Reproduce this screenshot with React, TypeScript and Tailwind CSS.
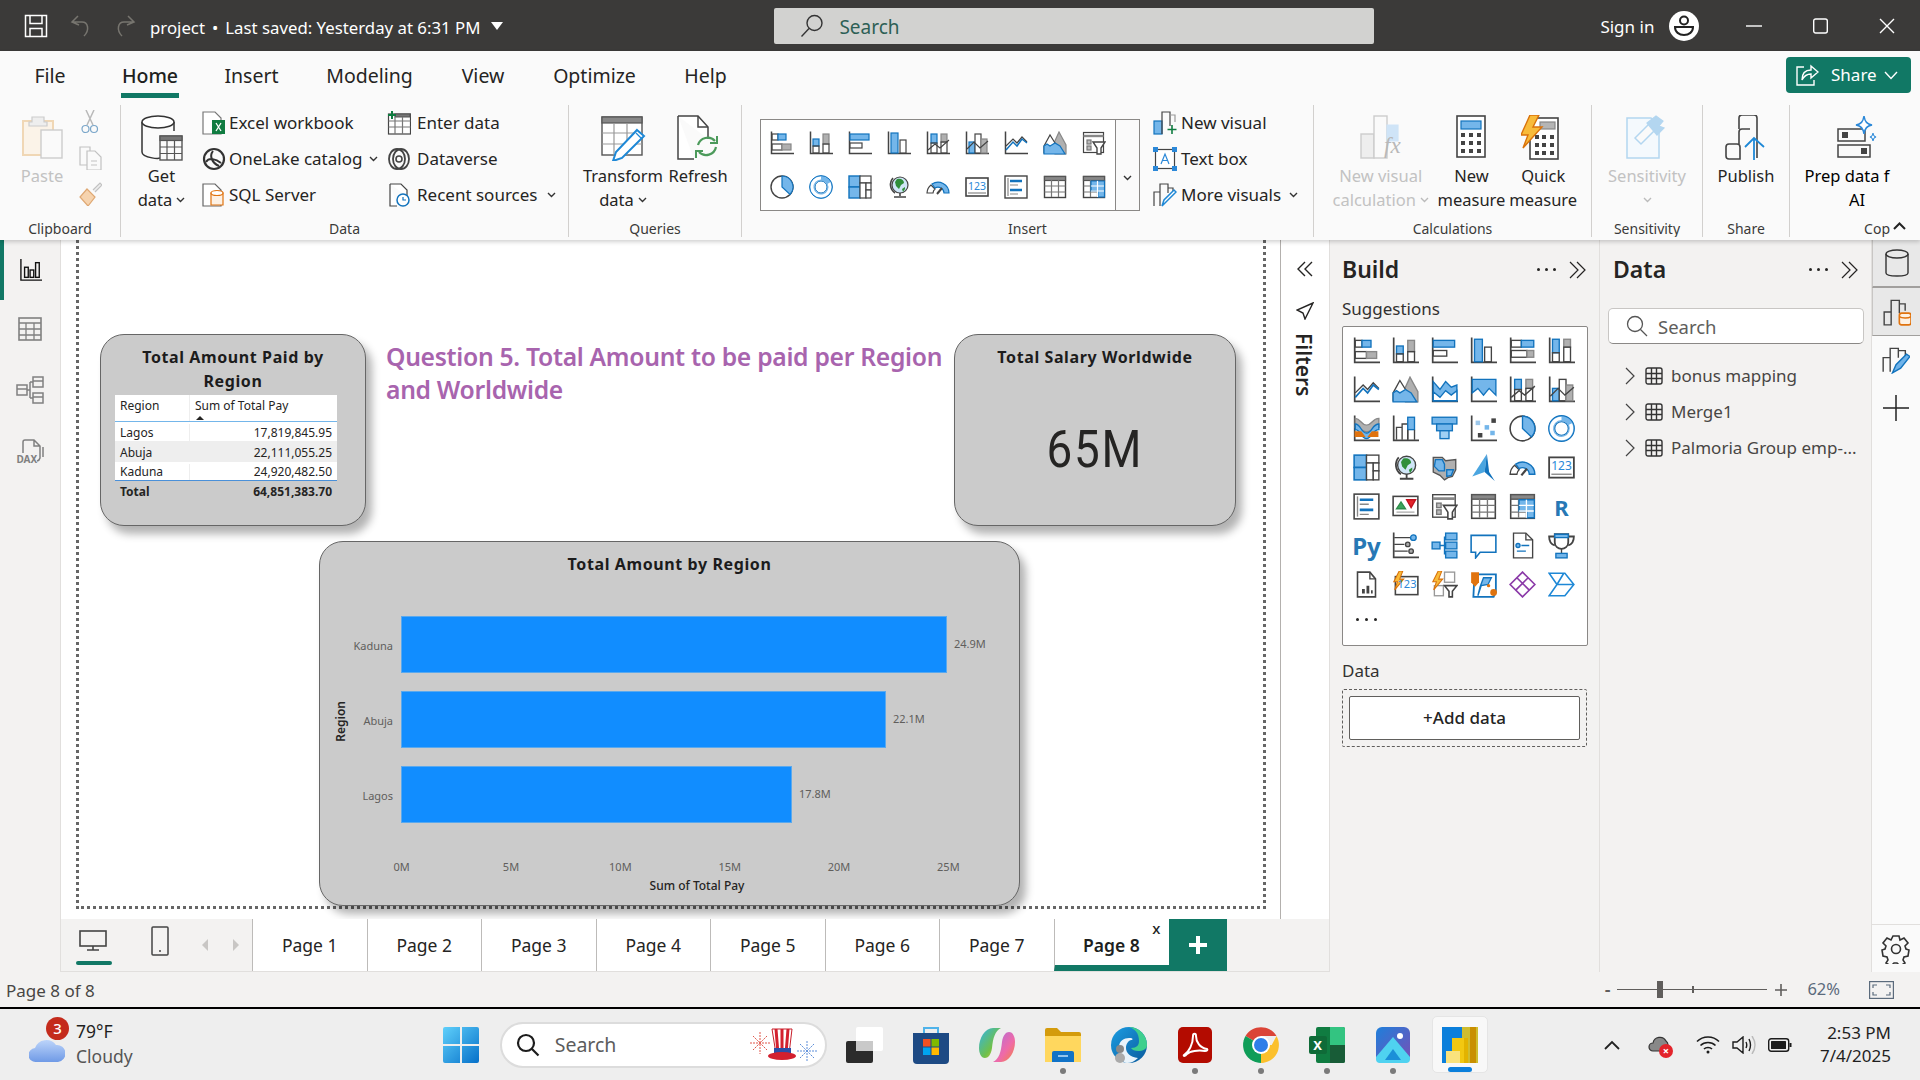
import type { ReactNode } from "react";

const DK = "#444444";
const BL = "#1273bd";
const LB = "#74b6ea";
const GY = "#b0b0b0";
const OR = "#e0730f";

function Svg({ s = 24, h, vb = "0 0 24 24", children, className }: { s?: number; h?: number; vb?: string; children: ReactNode; className?: string }) {
  return (
    <svg width={s} height={h ?? s} viewBox={vb} fill="none" stroke={DK} strokeWidth={1.2} className={`shrink-0 ${className ?? ""}`}>
      {children}
    </svg>
  );
}

const axis = <path d="M1.5 .5V22.5H24" strokeWidth={1.5} />;
const bolt = <path d="M8 0 2 12h4L3 21l10-12H8.500L12 0Z" fill="#f8bb3a" stroke="#d9720b" />;
const gridTable = (
  <>
    <rect x="1.500" y="1.500" width="21" height="21" fill="#fff" strokeWidth={1.4} />
    <rect x="1.500" y="1.500" width="21" height="4" fill="#888" stroke="#555" />
    <path d="M1.500 11h21M1.500 17h21M8.500 5v17M15.500 5v17" stroke="#777" />
  </>
);

// visual gallery glyphs, shared by the Insert group and the Build pane
const charts: Record<string, ReactNode> = {
  stackedBar: (<>{axis}<rect x="2" y="3" width="6" height="6" /><rect x="8" y="3" width="8" height="6" fill={LB} stroke={BL} /><rect x="2" y="13" width="10" height="6" /><rect x="12" y="13" width="9" height="6" fill={GY} stroke="#888" /></>),
  stackedCol: (<>{axis}<rect x="4" y="8" width="6" height="7" fill={LB} stroke={BL} /><rect x="4" y="15" width="6" height="7" /><rect x="14" y="3" width="6" height="10" fill={GY} stroke="#888" /><rect x="14" y="13" width="6" height="9" /></>),
  clusteredBar: (<>{axis}<rect x="2" y="3" width="19" height="6" fill={LB} stroke={BL} /><rect x="2" y="12" width="12" height="5" fill="#fff" /></>),
  clusteredCol: (<>{axis}<rect x="4" y="2" width="7" height="20" fill={LB} stroke={BL} /><rect x="13" y="9" width="6" height="13" fill="#fff" /></>),
  hbar100: (<>{axis}<rect x="2" y="3" width="9" height="6" /><rect x="11" y="3" width="11" height="6" fill={LB} stroke={BL} /><rect x="2" y="12" width="14" height="6" /><rect x="16" y="12" width="6" height="6" fill={GY} stroke="#888" /></>),
  vbar100: (<>{axis}<rect x="4" y="2" width="6" height="12" fill={LB} stroke={BL} /><rect x="4" y="14" width="6" height="8" /><rect x="14" y="2" width="6" height="7" fill={GY} stroke="#888" /><rect x="14" y="9" width="6" height="13" /></>),
  line: (<>{axis}<path d="M2 15 9 8l4 4 5-6 5 5" /><path d="m2 19 7-8 4 4 5-7 5 4" stroke={BL} strokeWidth={1.5} /></>),
  area: (<><path d="M11 12 16 1l7 13v9H12Z" fill={GY} stroke="#888" /><path d="M1 15 7 4l5 8 6 10H1Z" fill="#fff" /><path d="M1 15v8h21l-5-8-5-3-5 3-3-2Z" fill={LB} stroke={BL} /></>),
  stackedArea: (<>{axis}<path d="M2 5 8 12l5-7 5 5 5-2v14H2Z" fill={LB} stroke={BL} /><path d="M2 14l6 5 5-6 5 4 5-4v9H2Z" fill="#fff" stroke={BL} /></>),
  area100: (<>{axis}<path d="M2 3h21v14l-6-6-5 6-5-6-5 4Z" fill={LB} stroke={BL} /></>),
  lineStacked: (<>{axis}<rect x="5" y="3" width="6" height="9" fill={LB} stroke={BL} /><rect x="5" y="12" width="6" height="10" /><rect x="15" y="3" width="6" height="8" fill={GY} stroke="#888" /><rect x="15" y="11" width="6" height="11" /><path d="m2 19 7-6 5 4 9-8" /></>),
  lineClustered: (<>{axis}<rect x="4" y="11" width="6" height="11" fill={LB} stroke={BL} /><rect x="10" y="3" width="6" height="19" fill="#fff" /><rect x="16" y="8" width="6" height="14" fill={GY} stroke="#888" /><path d="m2 18 7-7 6 6 8-7" /></>),
  ribbon: (<>{axis}<path d="M2 3c5 0 5 6 10 6s5-6 11-6v8c-6 0-6 4-11 4S7 11 2 11Z" fill={GY} stroke="#888" /><path d="M2 8c5 0 5 8 10 8s5-8 11-8v5c-6 0-6 8-11 8S7 13 2 13Z" fill={LB} stroke={BL} /><path d="M2 15h5l3 4H2ZM22 15h-5l-3 4h8Z" fill={OR} stroke={OR} /></>),
  waterfall: (<>{axis}<path d="M4 22V11h5v11M9 22V8h5v14" /><rect x="14" y="2" width="6" height="11" fill={LB} stroke={BL} /><path d="M14 22v-9M20 22V13" /></>),
  funnel: (<><rect x="1" y="2" width="22" height="6" fill={LB} stroke={BL} /><rect x="5" y="8" width="14" height="6" fill={LB} stroke={BL} /><rect x="8" y="14" width="8" height="7" fill="#9fd0f4" stroke={BL} /></>),
  scatter: (<>{axis}<g stroke="none"><rect x="5" y="5" width="4" height="4" fill="#9cc7ea" /><rect x="13" y="9" width="4" height="4" fill={LB} /><rect x="19" y="3" width="4" height="4" fill="#444" /><rect x="7" y="16" width="4" height="4" fill="#444" /><rect x="18" y="14" width="4" height="4" fill={LB} /></g></>),
  pie: (<><circle cx="12" cy="12" r="11" fill="#fff" strokeWidth={1.4} /><path d="M12 1a11 11 0 0 1 8 18.500L12 12Z" fill={LB} stroke={BL} /></>),
  donut: (<><circle cx="12" cy="12" r="9" stroke={LB} strokeWidth={5} /><path d="M12 3a9 9 0 1 0 8 5" stroke="#fff" strokeWidth={3} /><circle cx="12" cy="12" r="11.400" stroke={BL} strokeWidth={1} /><circle cx="12" cy="12" r="6" stroke={BL} strokeWidth={1} /></>),
  treemap: (<><rect x="1" y="1" width="11" height="11" fill={LB} stroke={BL} strokeWidth={1.4} /><rect x="1" y="12" width="11" height="11" fill={LB} stroke={BL} strokeWidth={1.4} /><rect x="12" y="1" width="11" height="7" fill="#fff" /><rect x="12" y="8" width="6" height="15" fill="#fff" /><rect x="18" y="8" width="5" height="7" fill="#fff" /><rect x="18" y="15" width="5" height="8" fill="#fff" /></>),
  globe: (<><circle cx="13" cy="10" r="8" fill="#cfe6f7" /><path d="M10 4c4-1 7 1 7 4l-3 2-2 4-3-3-1-4ZM15 14l3-2v2l-2 3Z" fill="#2f8f3a" stroke="none" /><path d="M6 3a10 10 0 0 0 2 15M13 18v3M7 22h12" strokeWidth={1.6} /></>),
  filledMap: (<><path d="M2 3h8l3 3 9-1v9l-3 6-4 1-3 2-4-4-6-3Z" fill={GY} stroke="#555" /><path d="M4 5h6l2 4v6H7L3 11Z" fill={LB} stroke={BL} /><path d="M14 14h6l-2 5-4 1Z" fill={LB} stroke={BL} /></>),
  azure: (<><path d="M15 0 2 20l11-4Z" fill="#4aa5e0" stroke="none" /><path d="m15 0 2 16 5 8-9-8Z" fill="#1273bd" stroke="none" /></>),
  gauge: (<><path d="M1 18a11 11 0 0 1 4-8l4 4a6 6 0 0 0-2 4Z" fill="#fff" /><path d="M6 9a11 11 0 0 1 17 9h-5a6 6 0 0 0-9-5Z" fill={LB} stroke={BL} /><path d="m11 19 5-6" strokeWidth={2} /></>),
  card: (<><rect x="1" y="3" width="22" height="18" fill="#fff" strokeWidth={1.6} /><path d="M3 18h18" stroke="#888" /></>),
  multiRow: (<><rect x="1" y="1" width="22" height="22" fill="#fff" strokeWidth={1.4} /><path d="M4 3v18" stroke="#888" /><path d="M6 6h12M6 15h12" stroke={BL} strokeWidth={2.4} /><path d="M6 10h8M6 19h8" stroke="#888" /></>),
  kpi: (<><rect x="1" y="3" width="22" height="17" fill="#fff" strokeWidth={1.4} /><path d="M4 14l4-6 4 6Z" fill="#3ba55c" stroke="#2e8b4a" /><path d="m13 6h8l-4 7Z" fill="#e3242b" stroke="#c1121f" /><path d="M4 17h16" stroke={GY} /></>),
  slicer: (<><rect x="1.500" y="1.500" width="20" height="20" fill="#fff" /><path d="M1.500 5h20" stroke="#888" strokeWidth={2.4} /><rect x="5" y="9" width="4" height="4" fill="#bbb" stroke="#777" /><rect x="5" y="15" width="4" height="4" fill="#bbb" stroke="#777" /><path d="M11 11h12l-4 6v6h-4v-6Z" fill="#fff" strokeWidth={1.4} /></>),
  table: gridTable,
  matrix: (<>{gridTable}<path d="M9 6h13.500v16H16v-6H9Z" fill={LB} stroke={BL} /><path d="M15.500 6v16M9 11h13M9 16h13" stroke="#fff" /></>),
  influencer: (<>{axis}<path d="M2 5h14M2 11h9M2 17h12" /><circle cx="19" cy="5" r="2.500" fill={LB} stroke={BL} /><circle cx="14" cy="11" r="2" fill="#aaa" /><circle cx="17" cy="17" r="2" fill="#aaa" /></>),
  decomp: (<><rect x="1" y="9" width="7" height="6" fill={LB} stroke={BL} /><path d="M8 12h4M12 4v16" stroke={BL} /><rect x="13" y="1" width="10" height="6" fill={LB} stroke={BL} /><rect x="13" y="9" width="10" height="6" fill={LB} stroke={BL} /><rect x="13" y="17" width="10" height="6" fill={LB} stroke={BL} /></>),
  qna: <path d="M1 3h22v15H9l-4 5v-5H1Z" fill="#fff" stroke={BL} strokeWidth={1.4} />,
  narrative: (<><path d="M4 1h11l6 6v16H4Z" fill="#fff" /><path d="M15 1v6h6" /><circle cx="8" cy="12" r="1.800" fill={LB} stroke={BL} /><path d="M11 12h7M7 17h8" stroke={BL} /></>),
  trophy: (<><path d="M6 2h12v7c0 4-3 6-6 6s-6-2-6-6Z" fill="#fff" strokeWidth={1.6} /><path d="M6 4H1c0 5 2 7 5 8M18 4h5c0 5-2 7-5 8" strokeWidth={1.6} /><path d="M6 2h12v3H6Z" fill={LB} stroke={BL} /><path d="M12 15v4" /><rect x="7" y="19" width="10" height="4" fill={LB} stroke={BL} /></>),
  paginated: (<><path d="M4 1h11l5 6v16H4Z" fill="#fff" strokeWidth={1.4} /><path d="M15 1v6h5" /><path d="M8 20v-4h2.500v4ZM12 20V13h2.500v7ZM16 20v-3h1.500v3Z" fill="#444" stroke="none" /></>),
  cardNew: (<><rect x="3" y="5" width="20" height="16" fill="#fff" strokeWidth={1.4} /><g transform="scale(.8)">{bolt}</g></>),
  sliceNew: (<><rect x="12" y="1" width="9" height="9" fill="#fff" stroke="#999" /><rect x="3" y="13" width="8" height="9" fill="#fff" stroke="#999" /><path d="M12 13h11l-4 5v5h-3v-5Z" fill="#fff" strokeWidth={1.4} /><g transform="scale(.8)">{bolt}</g></>),
  arcgis: (<><path d="M4 3h19v15l-2 5H3Z" fill="#fff" stroke={BL} strokeWidth={1.6} /><path d="M7 22l3-9 6-1 3-6h-7l-3 8Z" fill={LB} stroke={BL} /><path d="M1 1h7v9l-3.500 4L1 10Z" fill={OR} stroke="none" /><circle cx="21" cy="19" r="3" fill={OR} stroke="none" /><circle cx="16.500" cy="13" r="1.500" fill={OR} stroke="none" /></>),
  powerApps: <path d="m12 1 11 11-11 11L1 12Zm-5 5 11 11M17 6 6 17" stroke="#8b3aa8" strokeWidth={1.5} />,
  automate: <path d="M1 2h14l8 10-8 10H1l7-10Zm7 10h14M8 12l6-10" stroke="#1e88d6" strokeWidth={1.4} />,
};

function Chart({ name, s = 24 }: { name: string; s?: number }) {
  if (name === "r" || name === "py") {
    return (
      <span className={`flex items-center justify-center w-[27px] h-[27px] font-bold leading-none text-[#2778b5] ${name === "r" ? "text-[22px]" : "text-[24px]"}`}>
        {name === "r" ? "R" : "Py"}
      </span>
    );
  }
  // the number cards carry their digits as real text on top of the drawing
  const digits = name === "card" || name === "cardNew";
  return (
    <span className="relative block" style={{ width: s, height: s }}>
      <Svg s={s}>{charts[name]}</Svg>
      {digits && (
        <span className={`absolute top-[5px] right-0 left-0 text-center text-[#2b88d8] leading-[13px] ${s === 24 ? "text-[10.500px]" : name === "card" ? "text-[12px]" : "text-[11px] pl-[3px] pt-[1px]"}`}>
          123
        </span>
      )}
    </span>
  );
}

function Caret({ className = "", color = "#333" }: { className?: string; color?: string }) {
  return (
    <svg width="9" height="6" viewBox="0 0 9 6" fill="none" stroke={color} strokeWidth={1.4} className={`shrink-0 ${className}`}>
      <path d="m1 1 3.500 3.500L8 1" />
    </svg>
  );
}

function BigButton({ icon, lines, caret, disabled, w }: { icon: ReactNode; lines: string[]; caret?: boolean; disabled?: boolean; w: string }) {
  return (
    <div className={`flex flex-col items-center pt-[10px] ${w}`}>
      <div className="h-[47px] flex items-start justify-center">{icon}</div>
      <div className={`flex flex-col items-center mt-[2px] text-[16.500px] leading-[24px] whitespace-nowrap ${disabled ? "text-[#c2c2c2]" : "text-[#252423]"}`}>
        {lines.map((l, i) => (
          <div key={i} className="flex items-center gap-[4px]">
            {l}
            {caret && i === lines.length - 1 && <Caret color={disabled ? "#bbb" : "#333"} />}
          </div>
        ))}
      </div>
    </div>
  );
}

function SmallButton({ icon, text, caret, gap }: { icon: ReactNode; text: string; caret?: boolean; gap: string }) {
  return (
    <div className={`h-[36px] flex items-center whitespace-nowrap text-[17px] text-[#252423] ${gap}`}>
      {icon}
      <span>{text}</span>
      {caret && <Caret className="ml-[4px]" />}
    </div>
  );
}

function Group({ label, w, children, right, labelClass = "justify-center" }: { label: string; w: string; children: ReactNode; right?: ReactNode; labelClass?: string }) {
  return (
    <div className={`${w} shrink-0 flex flex-col h-[132px] border-r border-[#d2d0ce] overflow-hidden`}>
      <div className="flex h-[113px]">{children}</div>
      <div className={`flex-1 flex items-center pt-[3px] text-[14px] leading-none text-[#3b3a39] ${labelClass}`}>
        {label}
        {right}
      </div>
    </div>
  );
}

function TitleBar() {
  return (
    <div className="h-[51px] shrink-0 bg-[#3b3a39] flex items-center text-white">
      <svg width="24" height="24" viewBox="0 0 24 24" fill="none" stroke="#fff" strokeWidth={1.5} className="ml-[24px]">
        <path d="M1.500 1.500h21v21h-21ZM6 1.500v8h12v-8M6 22.500v-8h12v8" />
      </svg>
      <svg width="22" height="24" viewBox="0 0 22 24" fill="none" stroke="#77756f" strokeWidth={1.5} className="ml-[22px]">
        <path d="M8 2 2 8l7 3M2 8h10c6 0 8 8 2 14" />
      </svg>
      <svg width="22" height="24" viewBox="0 0 22 24" fill="none" stroke="#77756f" strokeWidth={1.5} className="ml-[22px]">
        <path d="m14 2 6 6-7 3m7-3H10c-6 0-8 8-2 14" />
      </svg>
      <div className="ml-[14px] pt-[4px] text-[16.800px] flex items-center whitespace-nowrap">
        <span>project</span>
        <span className="mx-[7px]">•</span>
        <span>Last saved: Yesterday at 6:31 PM</span>
      </div>
      <div className="ml-[11px] w-0 h-0 border-x-[6px] border-x-transparent border-t-[8px] border-t-white" />
      <div className="ml-[271px] w-[600px] h-[36px] rounded-[2px] bg-[#d2d2d0] flex items-center pl-[26px] gap-[15px] text-[19px] text-[#2d5f55]">
        <svg width="24" height="24" viewBox="0 0 24 24" fill="none" stroke="#333" strokeWidth={1.4}>
          <circle cx="14.500" cy="9" r="7.500" />
          <path d="M9 14.500 1.500 22.500" />
        </svg>
        <span className="pt-[3px]">Search</span>
      </div>
      <div className="ml-[226px] pt-[2px] text-[17px]">Sign in</div>
      <div className="ml-[15px] w-[30px] h-[30px] rounded-full bg-white flex flex-col items-center justify-center">
        <svg width="22" height="24" viewBox="0 0 22 24" fill="none" stroke="#222" strokeWidth={2}>
          <circle cx="11" cy="6.500" r="4" />
          <path d="M2 13h18c0 5-4 8-9 8s-9-3-9-8Z" />
        </svg>
      </div>
      <svg width="16" height="16" viewBox="0 0 16 16" stroke="#fff" strokeWidth={1.4} className="ml-[47px]"><path d="M0 8h16" /></svg>
      <svg width="15" height="16" viewBox="0 0 15 16" fill="none" stroke="#fff" strokeWidth={1.4} className="ml-[51px]"><rect x=".700" y="1" width="13.600" height="14" rx="2" /></svg>
      <svg width="16" height="16" viewBox="0 0 16 16" stroke="#fff" strokeWidth={1.4} className="ml-[51px]"><path d="m1 1 14 14M15 1 1 15" /></svg>
    </div>
  );
}

function RibbonTabs() {
  const tabs = [
    { t: "File", w: "w-[30px]", ml: "ml-[35px]" },
    { t: "Home", w: "w-[58px]", ml: "ml-[56px]" },
    { t: "Insert", w: "w-[51px]", ml: "ml-[47px]" },
    { t: "Modeling", w: "w-[87px]", ml: "ml-[49px]" },
    { t: "View", w: "w-[44px]", ml: "ml-[48px]" },
    { t: "Optimize", w: "w-[83px]", ml: "ml-[48px]" },
    { t: "Help", w: "w-[43px]", ml: "ml-[48px]" },
  ];
  return (
    <div className="h-[54px] flex items-start">
      {tabs.map((x) => (
        <div key={x.t} className={`${x.ml} ${x.w} h-[47px] flex items-center justify-center whitespace-nowrap text-[19.500px] relative ${x.t === "Home" ? "font-medium text-[#201f1e]" : "text-[#252423]"}`}>
          <span className="mt-[3px]">{x.t}</span>
          {x.t === "Home" && <div className="absolute left-0 right-0 bottom-0 h-[5px] bg-[#117865]" />}
        </div>
      ))}
      <div className="ml-auto mr-[9px] mt-[6px] w-[125px] h-[36px] rounded-[4px] bg-[#117865] text-white text-[17px] flex items-center pl-[9px]">
        <svg width="24" height="24" viewBox="0 0 24 24" fill="none" stroke="#fff" strokeWidth={1.4}>
          <path d="M9 4H2v18h17v-5M7 17c0-7 4-10 9-10V3l7 6-7 6v-4c-4 0-7 2-9 6Z" />
        </svg>
        <span className="ml-[12px]">Share</span>
        <svg width="14" height="9" viewBox="0 0 14 9" fill="none" stroke="#fff" strokeWidth={1.4} className="ml-[7px]"><path d="m1 1 6 6.500L13 1" /></svg>
      </div>
    </div>
  );
}

function Ribbon() {
  const gallery = ["stackedBar", "stackedCol", "clusteredBar", "clusteredCol", "lineStacked", "lineClustered", "line", "area", "slicer", "pie", "donut", "treemap", "globe", "gauge", "card", "multiRow", "table", "matrix"];
  return (
    <div className="h-[189px] shrink-0 bg-[#fafafa] flex flex-col relative z-10 shadow-[0_2px_4px_rgba(0,0,0,0.18)]">
      <RibbonTabs />
      <div className="flex">
        <Group label="Clipboard" w="w-[121px]">
          <BigButton
            w="w-[84px]"
            disabled
            lines={["Paste"]}
            icon={
              <Svg s={42} h={44} vb="0 0 42 44">
                <path d="M2 6h30v34H2Z" fill="#fbf3e8" stroke="#f0d7b5" strokeWidth={2} />
                <path d="M11 7V2h12v5h3v4H8V7Z" fill="#eee" stroke="#ccc" />
                <rect x="20" y="15" width="21" height="28" fill="#fafafa" stroke="#ccc" strokeWidth={1.4} />
              </Svg>
            }
          />
          <div className="w-[37px] flex flex-col items-start pt-[5px] -ml-[6px]">
            <Svg s={24} vb="0 0 24 24" className="mb-[12px]"><path d="M8 0l7 15M16 0 9 15" stroke="#b9b9b9" strokeWidth={1.5} /><circle cx="7.500" cy="19" r="3.500" stroke="#7aa6c9" /><circle cx="16" cy="19" r="3.500" stroke="#7aa6c9" /></Svg>
            <Svg s={24} className="mb-[12px]"><path d="M2 1h10v18H2Z" stroke="#c2c2c2" /><path d="M9 5h8l6 6v13H9Z" fill="#fafafa" stroke="#c2c2c2" /><path d="M13 15h6M13 19h6" stroke="#c2c2c2" /></Svg>
            <Svg s={24}><path d="M15 8 22 1l2 2-7 7" stroke="#c2c2c2" fill="#eee" /><path d="m9 7 8 8-7 9-8-9Z" fill="#f6d3ae" stroke="#dfa873" /></Svg>
          </div>
        </Group>

        <Group label="Data" w="w-[448px]">
          <BigButton
            w="w-[81px]"
            lines={["Get", "data"]}
            caret
            icon={
              <Svg s={42} h={46} vb="0 0 42 46">
                <path d="M1 7v30c0 6 20 8 20 5M33 16V7" stroke="#333" strokeWidth={1.5} />
                <ellipse cx="17" cy="7" rx="16" ry="6" fill="#fff" stroke="#333" strokeWidth={1.5} />
                <rect x="19" y="21" width="22" height="24" fill="#fafafa" stroke="#555" strokeWidth={1.4} />
                <rect x="19" y="21" width="22" height="4.500" fill="#777" stroke="#555" />
                <path d="M19 32h22M19 38.500h22M26 25v20M33.500 25v20" stroke="#555" />
              </Svg>
            }
          />
          <div className="w-[185px] flex flex-col">
            <SmallButton gap="gap-[3px]" text="Excel workbook" icon={<Svg><path d="M1 1h12l6 6v16H1Z" fill="#fff" stroke="#777" /><rect x="10" y="9" width="13" height="14" fill="#107c41" stroke="none" /><path d="m14 12 5 8M19 12l-5 8" stroke="#fff" strokeWidth={1.3} /></Svg>} />
            <SmallButton gap="gap-[3px]" text="OneLake catalog" caret icon={<Svg><circle cx="12" cy="12" r="10" strokeWidth={2.2} stroke="#333" /><path d="M4 15c3-5 10-3 15 1M11 4c-4 5-1 12 6 15" strokeWidth={2} stroke="#333" /></Svg>} />
            <SmallButton gap="gap-[3px]" text="SQL Server" icon={<Svg><path d="M1 1h12l6 6v16H1Z" fill="#fff" stroke="#666" /><path d="M9 10h12v12H9Z" fill="#fdf1e4" stroke={OR} /><ellipse cx="15" cy="10" rx="6" ry="2.500" fill="#fff" stroke={OR} /></Svg>} />
          </div>
          <div className="flex flex-col">
            <SmallButton gap="gap-[6px]" text="Enter data" icon={<Svg><rect x="1.500" y="3" width="22" height="20" fill="#fff" /><path d="M8 3h15v3H8Z" fill="#777" stroke="#555" /><path d="M1.500 10h22M1.500 16h22M8 6v17M15.500 6v17" stroke="#777" /><path d="M5 0v8M1 4h8" stroke="#107c41" strokeWidth={2} /></Svg>} />
            <SmallButton gap="gap-[6px]" text="Dataverse" icon={<Svg><ellipse cx="10" cy="12" rx="8" ry="10" strokeWidth={1.8} /><ellipse cx="14" cy="12" rx="8" ry="10" strokeWidth={1.8} /><circle cx="12" cy="12" r="3" strokeWidth={1.6} /></Svg>} />
            <SmallButton gap="gap-[6px]" text="Recent sources" caret icon={<Svg><path d="M3 1h11l6 6v6M3 1v22h7" fill="#fff" /><circle cx="16" cy="17" r="6" fill="#fff" stroke={BL} strokeWidth={1.5} /><path d="M16 14v3h3" stroke={BL} /></Svg>} />
          </div>
        </Group>

        <Group label="Queries" w="w-[173px]">
          <BigButton
            w="w-[108px]"
            lines={["Transform", "data"]}
            caret
            icon={
              <Svg s={46} vb="0 0 46 46">
                <rect x="2" y="2" width="40" height="38" fill="#fff" stroke="#555" strokeWidth={1.4} />
                <rect x="2" y="2" width="40" height="6" fill="#888" stroke="#555" />
                <path d="M2 18h40M2 29h40M14 8v32M27 8v32" stroke="#999" />
                <path d="M37 15 44 21 22 43l-9 3 3-9Z" fill="#fff" stroke="#1e88d6" strokeWidth={2} />
                <path d="M36 18 42 24" stroke="#1e88d6" />
              </Svg>
            }
          />
          <BigButton
            w="w-[42px]"
            lines={["Refresh"]}
            icon={
              <Svg s={42} h={46} vb="0 0 42 46">
                <path d="M1 1h20l10 11v12M1 1v43h16" fill="#fff" stroke="#444" strokeWidth={1.5} />
                <path d="M21 1v11h10" stroke="#444" strokeWidth={1.5} />
                <path d="M21 30a10 10 0 0 1 17-4M39 32a10 10 0 0 1-17 5" stroke="#4c9a5b" strokeWidth={2.2} />
                <path d="M40 21v7h-7M19 43v-7h7" stroke="#4c9a5b" strokeWidth={2} />
              </Svg>
            }
          />
        </Group>

        <Group label="Insert" w="w-[572px]">
          <div className="ml-[18px] mt-[14px] w-[380px] h-[92px] bg-white border border-[#8a8886] flex">
            <div className="flex-1 grid grid-cols-[repeat(9,24px)] content-start gap-x-[15px] gap-y-[20px] pl-[9px] pt-[11px]">
              {gallery.map((g) => (
                <Chart key={g} name={g} />
              ))}
            </div>
            <div className="w-[24px] border-l border-[#8a8886] bg-[#fafafa] flex items-center justify-center pt-[26px]">
              <Caret />
            </div>
          </div>
          <div className="ml-[13px] flex flex-col">
            <SmallButton gap="gap-[4px]" text="New visual" icon={<Svg><rect x="1" y="10" width="8" height="13" fill={LB} stroke={BL} /><path d="M9 23V1h8v14" /><path d="M17 4h5v7" stroke="#999" /><path d="M19 14v9M14.500 18.500h9" stroke="#107c41" strokeWidth={1.6} /></Svg>} />
            <SmallButton
              gap="gap-[4px]"
              text="Text box"
              icon={
                <Svg>
                  <rect x="2.500" y="2.500" width="19" height="19" fill="#fff" />
                  <g fill="#2b88d8" stroke="none"><rect x="0" y="0" width="5" height="5" /><rect x="19" y="0" width="5" height="5" /><rect x="0" y="19" width="5" height="5" /><rect x="19" y="19" width="5" height="5" /></g>
                  <path d="m8 17 4-10 4 10M9.500 13.500h5" stroke="#2b88d8" />
                </Svg>
              }
            />
            <SmallButton gap="gap-[4px]" text="More visuals" caret icon={<Svg><path d="M1 23V9h6v14M7 9V1h8v9M15 5h5v6" /><path d="m9 23 2-6 10-10 2 2-10 10Z" fill="#fff" stroke="#1e88d6" strokeWidth={1.5} /></Svg>} />
          </div>
        </Group>

        <Group label="Calculations" w="w-[278px]">
          <BigButton
            w="w-[134px]"
            disabled
            lines={["New visual", "calculation"]}
            caret
            icon={
              <span className="relative block w-[42px] h-[44px]">
                <Svg s={42} h={44} vb="0 0 42 44">
                  <rect x="1" y="19" width="13" height="24" fill="#eee" stroke="#ccc" strokeWidth={1.4} />
                  <rect x="14" y="1" width="13" height="42" fill="#fafafa" stroke="#ccc" strokeWidth={1.4} />
                  <path d="M27 10h11v16H27Z" fill="#cfe4f7" stroke="#cfe4f7" />
                </Svg>
                <span className="absolute right-[1px] bottom-[0px] font-['Liberation_Serif',serif] italic text-[23px] leading-[26px] text-[#b8b8b8]">fx</span>
              </span>
            }
          />
          <BigButton
            w="w-[48px]"
            lines={["New", "measure"]}
            icon={
              <Svg s={30} h={43} vb="0 0 30 43">
                <rect x="1" y="1" width="28" height="41" fill="#fff" stroke="#444" strokeWidth={1.6} />
                <rect x="5" y="6" width="20" height="8" fill={LB} stroke={BL} />
                <g fill="#444" stroke="none">
                  <rect x="5" y="18" width="4" height="4" /><rect x="13" y="18" width="4" height="4" /><rect x="21" y="18" width="4" height="4" />
                  <rect x="5" y="26" width="4" height="4" /><rect x="13" y="26" width="4" height="4" /><rect x="21" y="26" width="4" height="4" />
                  <rect x="5" y="34" width="4" height="4" /><rect x="13" y="34" width="4" height="4" /><rect x="21" y="34" width="4" height="4" />
                </g>
              </Svg>
            }
          />
          <BigButton
            w="w-[96px]"
            lines={["Quick", "measure"]}
            icon={
              <Svg s={38} h={45} vb="0 0 38 45" className="-ml-[6px]">
                <rect x="9" y="3" width="28" height="41" fill="#fff" stroke="#444" strokeWidth={1.6} />
                <rect x="19" y="7" width="15" height="7" fill="#b5b5b5" stroke="#888" />
                <g fill="#444" stroke="none">
                  <rect x="14" y="20" width="4" height="4" /><rect x="21" y="20" width="4" height="4" /><rect x="29" y="20" width="4" height="4" />
                  <rect x="14" y="28" width="4" height="4" /><rect x="21" y="28" width="4" height="4" /><rect x="29" y="28" width="4" height="4" />
                  <rect x="14" y="36" width="4" height="4" /><rect x="21" y="36" width="4" height="4" /><rect x="29" y="36" width="4" height="4" />
                </g>
                <path d="M9 0 0 20h7L2 33 21 12h-9l6-12Z" fill="#f8bb3a" stroke="#d9720b" strokeWidth={1.4} />
              </Svg>
            }
          />
        </Group>

        <Group label="Sensitivity" w="w-[111px]">
          <div className="w-full flex flex-col items-center pt-[10px]">
            <div className="h-[47px]">
              <Svg s={42} h={44} vb="0 0 42 44">
                <path d="M1 3h24l8 8v32H1Z" fill="#f4f9fd" stroke="#b3d6f0" strokeWidth={1.5} />
                <path d="m9 23 15-15 6 6-15 15Z" fill="#fafafa" stroke="#b3d6f0" strokeWidth={1.5} />
                <path d="m21 8 9-7 7 5-4 5 5 2-7 7Z" fill="#b3d6f0" stroke="#b3d6f0" />
              </Svg>
            </div>
            <div className="mt-[2px] text-[16.500px] leading-[24px] text-[#c2c2c2]">Sensitivity</div>
            <div className="h-[24px] flex items-center"><Caret color="#bbb" /></div>
          </div>
        </Group>

        <Group label="Share" w="w-[87px]">
          <BigButton
            w="w-full"
            lines={["Publish"]}
            icon={
              <Svg s={42} h={46} vb="0 0 42 46">
                <path d="M14 14V3a3 3 0 0 1 3-3h12a3 3 0 0 1 3 3v40" stroke="#444" strokeWidth={1.6} />
                <path d="M14 29V17a3 3 0 0 1 3-3h8M1 32a3 3 0 0 1 3-3h8a3 3 0 0 1 3 3v12H4a3 3 0 0 1-3-3Z" stroke="#444" strokeWidth={1.6} />
                <path d="M29 45V24M20 32l9-9 10 9" stroke="#1e88d6" strokeWidth={1.8} />
              </Svg>
            }
          />
        </Group>

        <Group
          label="Cop"
          w="w-[130px] border-r-0"
          labelClass="justify-end pr-[14px]"
          right={<svg width="13" height="8" viewBox="0 0 13 8" fill="none" stroke="#222" strokeWidth={2} className="ml-[3px] -mt-[6px]"><path d="m1 7 5.500-5.500L12 7" /></svg>}
        >
          <div className="w-full flex flex-col items-center pt-[10px] pl-[4px]">
            <div className="h-[47px]">
              <Svg s={40} h={44} vb="0 0 40 44">
                <rect x="1" y="14" width="27" height="12" stroke="#444" strokeWidth={1.5} />
                <rect x="5" y="17" width="6" height="6" fill="#444" stroke="none" />
                <rect x="1" y="30" width="32" height="12" stroke="#444" strokeWidth={1.5} />
                <rect x="24" y="33" width="6" height="6" fill="#444" stroke="none" />
                <path d="M27 1c1 6 3 8 8 9-5 1-7 3-8 9-1-6-3-8-8-9 5-1 7-3 8-9Z" fill="#fff" stroke="#2b88d8" strokeWidth={1.5} />
                <path d="M36 18c.5 3 1 3.500 3 4-2 .5-2.500 1-3 4-.5-3-1-3.500-3-4 2-.5 2.500-1 3-4Z" fill="#fff" stroke="#2b88d8" />
              </Svg>
            </div>
            <div className="mt-[2px] text-[16.500px] leading-[24px] whitespace-nowrap -ml-[20px]">Prep data f</div>
            <div className="text-[16.500px] leading-[24px]">AI</div>
          </div>
        </Group>
      </div>
    </div>
  );
}

function LeftNav() {
  return (
    <div className="w-[61px] shrink-0 bg-[#f3f2f1] border-r border-[#e1dfdd] flex flex-col items-center relative">
      <div className="absolute left-0 top-0 w-[4px] h-[60px] bg-[#117865]" />
      <Svg s={22} className="mt-[19px] ml-[2px]"><path d="M1 0v23h23" stroke="#111" strokeWidth={1.5} /><rect x="5" y="9" width="4" height="11" stroke="#111" strokeWidth={1.5} /><rect x="11" y="12" width="4" height="8" stroke="#111" strokeWidth={1.5} /><rect x="17" y="4" width="4" height="16" stroke="#111" strokeWidth={1.5} /></Svg>
      <Svg s={24} className="mt-[36px]"><rect x="1" y="1" width="22" height="22" stroke="#808080" strokeWidth={1.6} /><path d="M1 6h22M1 12h22M1 18h22M8 6v17M16 6v17" stroke="#808080" strokeWidth={1.3} /></Svg>
      <Svg s={28} vb="0 0 28 28" className="mt-[35px]"><g stroke="#808080" strokeWidth={1.5}><rect x="1" y="9" width="10" height="10" /><path d="M1 13h10" /><rect x="17" y="1" width="10" height="10" /><path d="M17 5h10" /><rect x="17" y="17" width="10" height="10" /><path d="M17 21h10M11 14h3M14 6h3M14 22h3M14 6v16" /></g></Svg>
      <div className="relative w-[27px] h-[26px] mt-[35px]">
        <svg width="27" height="26" viewBox="0 0 27 26" fill="none" stroke="#808080" strokeWidth={1.5}>
          <path d="M6 14V3a2 2 0 0 1 2-2h9l6 6v12a4 4 0 0 1-3 3M17 1v6h6M26 8v10" />
        </svg>
        <span className="absolute left-0 bottom-[-1px] text-[10px] leading-[13px] font-bold text-[#808080]">DAX</span>
      </div>
    </div>
  );
}

function CardTitle({ children }: { children: ReactNode }) {
  return <div className="text-center font-bold text-[16px] leading-[24px] tracking-[0.6px] text-[#1c1c1c]">{children}</div>;
}

function AmountTable() {
  const rows = [
    { r: "Lagos", v: "17,819,845.95", bg: "bg-white", h: "h-[19px]" },
    { r: "Abuja", v: "22,111,055.25", bg: "bg-[#eeeeee]", h: "h-[21px]" },
    { r: "Kaduna", v: "24,920,482.50", bg: "bg-white", h: "h-[18px]" },
  ];
  return (
    <div className="mx-[14px] mt-[2px] w-[222px] text-[12px] text-[#252423]">
      <div className="h-[27px] bg-white border-b border-[#74b6ea] flex">
        <div className="w-[75px] pl-[5px] pt-[2px] border-r border-[#eee]">Region</div>
        <div className="pl-[5px] pt-[2px] relative">
          Sum of Total Pay
          <div className="absolute left-[6px] top-[21px] w-0 h-0 border-x-[4px] border-x-transparent border-b-[4px] border-b-[#252423]" />
        </div>
      </div>
      {rows.map((x) => (
        <div key={x.r} className={`${x.h} ${x.bg} flex items-center pt-[2px]`}>
          <div className="w-[75px] pl-[5px] h-full flex items-center border-r border-[#eee]">{x.r}</div>
          <div className="flex-1 text-right pr-[5px]">{x.v}</div>
        </div>
      ))}
      <div className="border-t border-[#4a90d9] h-[20px] flex items-center font-bold pt-[2px]">
        <div className="w-[75px] pl-[5px]">Total</div>
        <div className="flex-1 text-right pr-[5px]">64,851,383.70</div>
      </div>
    </div>
  );
}

function BarChart() {
  const rows = [
    { l: "Kaduna", v: "24.9M", w: "w-[546px]" },
    { l: "Abuja", v: "22.1M", w: "w-[485px]" },
    { l: "Lagos", v: "17.8M", w: "w-[391px]" },
  ];
  const ticks = ["0M", "5M", "10M", "15M", "20M", "25M"];
  return (
    <>
      <div className="flex pl-[14px] mt-[40px]">
        <div className="w-[14px] h-[207px] flex items-center justify-center pt-[4px]">
          <span className="[writing-mode:vertical-rl] rotate-180 text-[12px] font-semibold text-[#252423]">Region</span>
        </div>
        <div className="flex flex-col gap-[18px]">
          {rows.map((x) => (
            <div key={x.l} className="flex items-center h-[57px] text-[11px] text-[#605e5c]">
              <span className="w-[45px] text-right pt-[3px]">{x.l}</span>
              <div className={`${x.w} ml-[8px] h-full bg-[#118dff] border border-[#5aa9ee]`} />
              <span className="ml-[7px]">{x.v}</span>
            </div>
          ))}
        </div>
      </div>
      <div className="ml-[27px] mt-[37px] w-[656px] grid grid-cols-6 text-center text-[11px] leading-[14px] text-[#605e5c]">
        {ticks.map((t) => (
          <span key={t}>{t}</span>
        ))}
      </div>
      <div className="ml-[27px] w-[656px] pl-[44px] text-center text-[12px] font-medium leading-[20px] mt-[2px] text-[#252423]">Sum of Total Pay</div>
    </>
  );
}

function Canvas() {
  const card = "absolute bg-[#cbcbcb] border border-[#666] shadow-[6px_8px_8px_rgba(0,0,0,0.3)]";
  return (
    <div className="flex-1 bg-white relative overflow-hidden">
      <div className="ml-[15px] mr-[14px] h-[669px] border-x-[3px] border-b-[3px] border-dotted border-[#666]" />
      <div className={`${card} left-[39px] top-[94px] w-[266px] h-[192px] rounded-[24px] pt-[10px]`}>
        <CardTitle>
          Total Amount Paid by
          <br />
          Region
        </CardTitle>
        <AmountTable />
      </div>
      <div className="absolute left-[325px] top-[100px] w-[568px] font-semibold text-[24.700px] leading-[33px] text-[#a864ae] tracking-[-0.3px]">
        Question 5. Total Amount to be paid per Region and Worldwide
      </div>
      <div className={`${card} left-[893px] top-[94px] w-[282px] h-[192px] rounded-[24px] pt-[10px] flex flex-col`}>
        <CardTitle>Total Salary Worldwide</CardTitle>
        <div className="flex-1 flex items-center justify-center pt-[6px]">
          <span className="inline-block scale-x-[0.88] font-['Roboto',sans-serif] text-[52px] tracking-[2px] text-[#252423]">65M</span>
        </div>
      </div>
      <div className={`${card} left-[258px] top-[301px] w-[701px] h-[365px] rounded-[24px] pt-[10px]`}>
        <CardTitle>Total Amount by Region</CardTitle>
        <BarChart />
      </div>
    </div>
  );
}

function FilterStrip() {
  return (
    <div className="w-[49px] shrink-0 bg-white border-l border-[#b3b0ad] flex flex-col items-center">
      <svg width="18" height="16" viewBox="0 0 18 16" fill="none" stroke="#252423" strokeWidth={1.4} className="mt-[21px] -ml-[1px]"><path d="M9 1 2 8l7 7M16 1 9 8l7 7" /></svg>
      <svg width="18" height="18" viewBox="0 0 18 18" fill="none" stroke="#252423" strokeWidth={1.4} className="mt-[25px]"><path d="M17 1 1 8l6 3 2 6Z" /></svg>
      <span className="mt-[13px] -ml-[4px] [writing-mode:vertical-rl] font-semibold text-[21px] leading-none text-[#252423]">Filters</span>
    </div>
  );
}

function PageTabs() {
  const pages = ["Page 1", "Page 2", "Page 3", "Page 4", "Page 5", "Page 6", "Page 7"];
  return (
    <div className="h-[53px] shrink-0 flex bg-[#f3f2f1] border-b border-[#e1dfdd]">
      <div className="w-[191px] flex items-start relative">
        <svg width="28" height="21" viewBox="0 0 28 21" fill="none" stroke="#444" strokeWidth={1.6} className="ml-[18px] mt-[11px]"><rect x="1" y="1" width="26" height="15" /><path d="M14 16v4M8 20h12" /></svg>
        <div className="absolute left-[15px] top-[42px] w-[36px] h-[4px] rounded-full bg-[#117865]" />
        <svg width="18" height="30" viewBox="0 0 18 30" fill="none" stroke="#444" strokeWidth={1.5} className="ml-[44px] mt-[7px]"><rect x="1" y="1" width="16" height="28" rx="1" /><path d="M8 25h2" /></svg>
        <div className="ml-[33px] mt-[20px] w-0 h-0 border-y-[6px] border-y-transparent border-r-[6px] border-r-[#c8c6c4]" />
        <div className="ml-[25px] mt-[20px] w-0 h-0 border-y-[6px] border-y-transparent border-l-[6px] border-l-[#c8c6c4]" />
      </div>
      {pages.map((p) => (
        <div key={p} className="w-[114.500px] bg-white border-l border-[#bdbbb9] flex items-center justify-center text-[17.500px] text-[#252423]">
          {p}
        </div>
      ))}
      <div className="w-[115px] bg-white border-l border-[#bdbbb9] border-b-[6px] border-b-[#117865] flex items-center justify-center font-semibold text-[17.500px] text-[#201f1e] relative pt-[6px]">
        Page 8
        <span className="absolute right-[8px] -top-[2px] text-[15px] font-medium">x</span>
      </div>
      <div className="w-[58px] bg-[#117865] text-white flex items-center justify-center">
        <svg width="18" height="18" viewBox="0 0 18 18" stroke="#fff" strokeWidth={4}><path d="M9 0v18M0 9h18" /></svg>
      </div>
      <div className="flex-1" />
    </div>
  );
}

function BuildPane() {
  const names = [
    "stackedBar", "stackedCol", "clusteredBar", "clusteredCol", "hbar100", "vbar100",
    "line", "area", "stackedArea", "area100", "lineStacked", "lineClustered",
    "ribbon", "waterfall", "funnel", "scatter", "pie", "donut",
    "treemap", "globe", "filledMap", "azure", "gauge", "card",
    "multiRow", "kpi", "slicer", "table", "matrix", "r",
    "py", "influencer", "decomp", "qna", "narrative", "trophy",
    "paginated", "cardNew", "sliceNew", "arcgis", "powerApps", "automate",
  ];
  return (
    <div className="w-[271px] shrink-0 bg-[#f3f2f1] border-x border-[#e1dfdd] pl-[12px] pr-[12px] flex flex-col">
      <div className="flex items-center h-[58px] pt-[1px]">
        <span className="font-semibold text-[23px] text-[#252423]">Build</span>
        <span className="ml-auto flex gap-[5px]">
          <i className="w-[3px] h-[3px] rounded-full bg-[#252423]" /><i className="w-[3px] h-[3px] rounded-full bg-[#252423]" /><i className="w-[3px] h-[3px] rounded-full bg-[#252423]" />
        </span>
        <svg width="18" height="18" viewBox="0 0 18 18" fill="none" stroke="#252423" strokeWidth={1.2} className="ml-[13px]"><path d="m1 1 8 8-8 8M8 1l8 8-8 8" /></svg>
      </div>
      <div className="text-[17px] leading-[24px] h-[28px] -mt-[1px] mb-[1px] text-[#323130]">Suggestions</div>
      <div className="w-[246px] h-[320px] bg-white border border-[#8a8886] rounded-[2px] pl-[10px] pt-[10px]">
        <div className="grid grid-cols-[repeat(6,27px)] gap-x-[12px] gap-y-[12px]">
          {names.map((n) => (
            <Chart key={n} name={n} s={27} />
          ))}
        </div>
        <div className="flex gap-[6px] ml-[3px] mt-[20px]">
          <i className="w-[3px] h-[3px] rounded-full bg-[#252423]" /><i className="w-[3px] h-[3px] rounded-full bg-[#252423]" /><i className="w-[3px] h-[3px] rounded-full bg-[#252423]" />
        </div>
      </div>
      <div className="mt-[13px] text-[17px] leading-[24px] text-[#323130]">Data</div>
      <div className="mt-[6px] w-[245px] h-[58px] rounded-[2px] border border-dashed border-[#605e5c] p-[6px]">
        <div className="h-full bg-white border border-[#605e5c] rounded-[2px] flex items-center justify-center font-medium text-[17px] text-[#252423]">+Add data</div>
      </div>
    </div>
  );
}

function DataPane() {
  const tables = ["bonus mapping", "Merge1", "Palmoria Group emp-..."];
  return (
    <div className="w-[272px] shrink-0 bg-[#f3f2f1] border-r border-[#e1dfdd] flex flex-col">
      <div className="flex items-center h-[58px] pl-[13px] pr-[12px] pt-[1px]">
        <span className="font-semibold text-[23px] text-[#252423]">Data</span>
        <span className="ml-auto flex gap-[5px]">
          <i className="w-[3px] h-[3px] rounded-full bg-[#252423]" /><i className="w-[3px] h-[3px] rounded-full bg-[#252423]" /><i className="w-[3px] h-[3px] rounded-full bg-[#252423]" />
        </span>
        <svg width="18" height="18" viewBox="0 0 18 18" fill="none" stroke="#252423" strokeWidth={1.2} className="ml-[13px]"><path d="m1 1 8 8-8 8M8 1l8 8-8 8" /></svg>
      </div>
      <div className="mt-[10px] mx-[8px] w-[256px] h-[36px] bg-white rounded-[5px] border border-[#c8c6c4] border-b-[#8a8886] flex items-center pl-[17px] gap-[10px] text-[18.500px] text-[#605e5c]">
        <svg width="22" height="22" viewBox="0 0 22 22" fill="none" stroke="#555" strokeWidth={1.3}><circle cx="9" cy="9" r="7.500" /><path d="m14.500 14.500 6.500 6.500" /></svg>
        <span className="pt-[1px]">Search</span>
      </div>
      <div className="mt-[14px] flex flex-col pl-[25px]">
        {tables.map((t) => (
          <div key={t} className="h-[36px] flex items-center text-[17px] text-[#484644] whitespace-nowrap">
            <svg width="10" height="18" viewBox="0 0 10 18" fill="none" stroke="#444" strokeWidth={1.2}><path d="m1 1 8 8-8 8" /></svg>
            <svg width="18" height="18" viewBox="0 0 18 18" fill="none" stroke="#333" strokeWidth={1.4} className="ml-[10px]"><rect x="1" y="1" width="16" height="16" rx="2" /><path d="M1 6.500h16M1 11.500h16M6.500 1v16M11.500 1v16" /></svg>
            <span className="ml-[8px]">{t}</span>
          </div>
        ))}
      </div>
    </div>
  );
}

function RightRail() {
  return (
    <div className="flex-1 bg-[#fafafa] flex flex-col">
      <div className="h-[48px] bg-[#e8e8e8] border-b-2 border-[#a19f9d] border-l border-l-[#c8c6c4] flex items-center justify-center">
        <Svg s={26} vb="0 0 26 28" h={28}><path d="M2 5v19c0 4 22 4 22 0V5" stroke="#333" strokeWidth={1.4} /><ellipse cx="13" cy="5" rx="11" ry="4" stroke="#333" strokeWidth={1.4} /></Svg>
      </div>
      <div className="h-[48px] bg-[#e8e8e8] border-l border-[#c8c6c4] border-b border-b-[#a19f9d] flex items-center justify-center">
        <Svg s={28}><path d="M1 12h6v11H1ZM7 23V2h7v11M14 5h5v6" stroke="#444" /><rect x="14" y="13" width="10" height="10" rx="2" stroke={OR} strokeWidth={1.4} fill="#fdf1e4" /><path d="M14 16c2 1.500 8 1.500 10 0" stroke={OR} /></Svg>
      </div>
      <div className="h-[48px] flex items-center justify-center">
        <Svg s={28}><path d="M1 22V10h6v12M7 10V2h7v8M14 4h6v5" stroke="#444" /><path d="m9 23 3-7 9-9 3 2-8 10Z" fill="#6fb3ea" stroke={BL} /></Svg>
      </div>
      <div className="h-[48px] flex items-center justify-center">
        <svg width="26" height="26" viewBox="0 0 26 26" stroke="#222" strokeWidth={1.5}><path d="M13 0v26M0 13h26" /></svg>
      </div>
      <div className="mt-auto h-[48px] border-t border-[#e1dfdd] flex items-center justify-center">
        <svg width="30" height="30" viewBox="0 0 30 30" fill="none" stroke="#333" strokeWidth={1.6}>
          <path d="M12 2h6l1 4 4-2 4 5-3 3 1 3 3 1-1 6-4 1-1 3 2 3-5 3-3-3h-3l-3 3-5-3 2-3-1-3-4-1-1-6 3-1 1-3-3-3 4-5 4 2Z" />
          <circle cx="15" cy="15" r="4.500" />
        </svg>
      </div>
    </div>
  );
}

function StatusBar() {
  return (
    <div className="h-[35px] shrink-0 bg-[#f3f2f1] flex items-center text-[#484644]">
      <span className="ml-[6px] pt-[3px] text-[17px]">Page 8 of 8</span>
      <span className="ml-auto text-[18px] font-semibold text-[#605e5c]">-</span>
      <div className="ml-[7px] w-[150px] h-[18px] relative flex items-center">
        <div className="w-full h-px bg-[#605e5c]" />
        <div className="absolute left-[40px] top-0 w-[6px] h-[17px] bg-[#605e5c]" />
        <div className="absolute left-[75px] top-[5px] w-[2px] h-[7px] bg-[#605e5c]" />
      </div>
      <svg width="12" height="12" viewBox="0 0 12 12" stroke="#605e5c" strokeWidth={1.6} className="ml-[8px]"><path d="M6 0v12M0 6h12" /></svg>
      <span className="ml-[20px] text-[16.500px] text-[#5b6b7c]">62%</span>
      <svg width="25" height="18" viewBox="0 0 25 18" fill="none" stroke="#5b6b7c" strokeWidth={1.2} className="ml-[29px] mr-[26px]"><rect x=".600" y=".600" width="23.800" height="16.800" /><path d="M4 7V4h4M17 4h4v3M4 11v3h4M17 14h4v-3" /></svg>
    </div>
  );
}

function TaskDot({ active, children }: { active?: "run" | "open"; children: ReactNode }) {
  return (
    <div className="w-[66px] h-full flex items-center justify-center relative">
      {children}
      {active === "run" && <div className="absolute left-1/2 -translate-x-1/2 bottom-[5px] w-[8px] h-[8px] rounded-full bg-[#7a7a7a] scale-75" />}
    </div>
  );
}

function Taskbar() {
  return (
    <div className="h-[71px] shrink-0 bg-[#eeeeee] flex items-center relative">
      <div className="ml-[29px] w-[47px] relative self-stretch flex items-center">
        <svg width="36" height="24" viewBox="0 0 36 24" className="mt-[12px]">
          <defs>
            <linearGradient id="cl" x1="0" y1="0" x2="0" y2="1"><stop offset="0" stopColor="#bcd4fa" /><stop offset="1" stopColor="#6f9ae6" /></linearGradient>
          </defs>
          <path d="M7 23a7 7 0 0 1-1-14 12 12 0 0 1 21-3 8.500 8.500 0 0 1 2 17Z" fill="url(#cl)" />
        </svg>
        <div className="absolute left-[17px] top-[8px] w-[23px] h-[23px] rounded-full bg-[#c42b1c] text-white text-[15px] font-medium flex items-center justify-center">3</div>
      </div>
      <div className="flex flex-col text-[17.500px] leading-[25px] -mt-[2px]">
        <span className="text-[#1f1f1f]">79°F</span>
        <span className="text-[#555]">Cloudy</span>
      </div>

      <svg width="36" height="36" viewBox="0 0 36 36" className="ml-[310px]">
        <defs>
          <linearGradient id="win" x1="0" y1="0" x2="1" y2="1"><stop offset="0" stopColor="#5fd0fb" /><stop offset="1" stopColor="#0670c9" /></linearGradient>
        </defs>
        <path d="M0 2a2 2 0 0 1 2-2h15v17H0ZM19 0h15a2 2 0 0 1 2 2v15H19ZM0 19h17v17H2a2 2 0 0 1-2-2ZM19 19h17v15a2 2 0 0 1-2 2H19Z" fill="url(#win)" />
      </svg>
      <div className="ml-[21px] w-[327px] h-[46px] rounded-full bg-white border-2 border-[#dcdcdc] flex items-center pl-[14px] text-[19.500px] text-[#5c5c5c] relative">
        <svg width="24" height="24" viewBox="0 0 24 24" fill="none" stroke="#1c1c1c" strokeWidth={2.2}><circle cx="10" cy="10" r="8" /><path d="m16 16 6.500 6.500" /></svg>
        <span className="ml-[15px]">Search</span>
        <svg width="68" height="36" viewBox="0 0 68 36" className="absolute right-[8px] top-[3px]">
          <g stroke="#e0564a" strokeWidth={1}><path d="M11 5v22M1 16h20M4 9l14 14M18 9 4 23" strokeDasharray="2 1" /></g>
          <g stroke="#5b8dd9" strokeWidth={1}><path d="M58 14v20M48 24h20M51 17l14 14M65 17 51 31" strokeDasharray="2 1" /></g>
          <path d="M23 2h20l-3 25H27Z" fill="#fff" stroke="#c81e2a" strokeWidth={1} />
          <path d="M27 2l2 25M33 2v25M39 2l-2 25" stroke="#d3202f" strokeWidth={3} />
          <rect x="25" y="21" width="17" height="6" fill="#2a4ea8" />
          <ellipse cx="33" cy="29" rx="14" ry="4" fill="#d3202f" />
        </svg>
      </div>

      <div className="ml-[5px] flex self-stretch">
        <TaskDot>
          <svg width="37" height="36" viewBox="0 0 37 36"><rect x="0" y="14" width="27" height="22" rx="2" fill="#2b2b2b" /><rect x="10" y="0" width="27" height="24" rx="2" fill="#fff" /><rect x="10" y="14" width="17" height="10" fill="#c9c9c9" /></svg>
        </TaskDot>
        <TaskDot>
          <svg width="36" height="38" viewBox="0 0 36 38">
            <path d="M11 7V2h14v5" fill="none" stroke="#4fb3ea" strokeWidth={2} />
            <path d="M0 7h36v27a4 4 0 0 1-4 4H4a4 4 0 0 1-4-4Z" fill="#1d4a84" />
            <rect x="10" y="13" width="7.500" height="7.500" fill="#f25022" /><rect x="18.500" y="13" width="7.500" height="7.500" fill="#7fba00" /><rect x="10" y="21.500" width="7.500" height="7.500" fill="#00a4ef" /><rect x="18.500" y="21.500" width="7.500" height="7.500" fill="#ffb900" />
          </svg>
        </TaskDot>
        <TaskDot>
          <svg width="36" height="34" viewBox="0 0 36 34">
            <defs>
              <linearGradient id="co1" x1="0" y1="0" x2="1" y2="1"><stop offset="0" stopColor="#32b4e8" /><stop offset=".6" stopColor="#6fc04a" /><stop offset="1" stopColor="#f0c330" /></linearGradient>
              <linearGradient id="co2" x1="0" y1="0" x2="1" y2="1"><stop offset="0" stopColor="#a86fe0" /><stop offset=".6" stopColor="#ef6aa8" /><stop offset="1" stopColor="#f2853c" /></linearGradient>
            </defs>
            <path d="M14 0h8c-6 3-8 10-9 20-1 7-4 10-7 10-4 0-6-5-6-10C0 10 6 0 14 0Z" fill="url(#co1)" />
            <path d="M22 34h-8c6-3 8-10 9-20 1-7 4-10 7-10 4 0 6 5 6 10 0 10-6 20-14 20Z" fill="url(#co2)" />
          </svg>
        </TaskDot>
        <TaskDot active="run">
          <svg width="36" height="36" viewBox="0 0 36 36"><path d="M0 3a2 2 0 0 1 2-2h10l4 4h18a2 2 0 0 1 2 2v6H0Z" fill="#d49b0c" /><path d="M0 9h36v26H0Z" fill="#ffd75e" /><path d="M9 24h18a2 2 0 0 1 2 2v9H7v-9a2 2 0 0 1 2-2Z" fill="#1173c7" /><path d="M13 29h10" stroke="#bfe1fa" strokeWidth={1.5} /></svg>
        </TaskDot>
        <TaskDot>
          <svg width="36" height="36" viewBox="0 0 36 36">
            <defs>
              <linearGradient id="ed" x1="0" y1="0" x2="1" y2="1"><stop offset="0" stopColor="#1b9de2" /><stop offset="1" stopColor="#0b5a9c" /></linearGradient>
            </defs>
            <circle cx="18" cy="18" r="18" fill="url(#ed)" />
            <path d="M18 0c10 0 18 8 18 18 0 4-4 6-9 6-3 0-6-1-7-3 6 0 8-3 8-7C28 6 24 2 18 0Z" fill="#3ecf8e" />
            <path d="M8 20c0-6 5-9 10-9s4 2 2 2c-3 1-5 4-5 8 0 5 4 9 12 10-3 3-7 5-11 5C11 36 8 28 8 20Z" fill="#e9f3fa" />
            <circle cx="9" cy="22" r="4" fill="#888" /><circle cx="9" cy="31" r="5" fill="#aaa" />
          </svg>
        </TaskDot>
        <TaskDot active="run">
          <svg width="34" height="36" viewBox="0 0 34 36"><rect width="34" height="36" rx="5" fill="#b30b00" /><path d="M6 28c5-3 9-11 9-19 0-3 3-3 3 0 0 6 4 12 11 13 1 1 0 2-2 2-7-1-15 0-18 3-2 3-4 2-3 1Z" fill="none" stroke="#fff" strokeWidth={2} /></svg>
        </TaskDot>
        <TaskDot active="run">
          <svg width="36" height="36" viewBox="0 0 36 36">
            <path d="M18 18 2.500 9A18 18 0 0 1 33.500 9H18Z" fill="#db4437" />
            <path d="M18 18h15.500A18 18 0 0 1 18 36Z" fill="#fbc02d" />
            <path d="M18 18v18A18 18 0 0 1 2.500 9Z" fill="#0f9d58" />
            <path d="M33.500 9A18 18 0 0 1 18 36l8-13Z" fill="#fbc02d" />
            <circle cx="18" cy="18" r="9" fill="#fff" /><circle cx="18" cy="18" r="7" fill="#2f7ee8" />
          </svg>
        </TaskDot>
        <TaskDot active="run">
          <span className="relative block w-[36px] h-[36px]">
            <svg width="36" height="36" viewBox="0 0 36 36"><rect x="7" y="0" width="29" height="36" rx="2" fill="#107c41" /><path d="M21 0h13a2 2 0 0 1 2 2v16H21Z" fill="#33c481" /><path d="M21 18h15v16a2 2 0 0 1-2 2H21Z" fill="#185c37" /><rect x="0" y="9" width="18" height="18" rx="2" fill="#0f6b38" /></svg>
            <span className="absolute left-0 top-[9px] w-[18px] h-[18px] text-center text-[13px] leading-[18px] font-bold text-white">X</span>
          </span>
        </TaskDot>
        <TaskDot active="run">
          <svg width="34" height="36" viewBox="0 0 34 36">
            <defs>
              <linearGradient id="ph" x1="0" y1="0" x2="1" y2="1"><stop offset="0" stopColor="#1e7fdb" /><stop offset="1" stopColor="#7a4fb5" /></linearGradient>
            </defs>
            <rect width="34" height="36" rx="6" fill="url(#ph)" />
            <circle cx="24" cy="9" r="3" fill="#fff" />
            <path d="M0 30 17 10l17 20v2a4 4 0 0 1-4 4H4a4 4 0 0 1-4-4Z" fill="#4fd2f0" />
            <path d="M9 33 17 22l8 11Z" fill="#1b8fd8" />
          </svg>
        </TaskDot>
        <div className="ml-[6px] w-[56px] h-[57px] self-center rounded-[5px] bg-[#f8f8f8] border border-[#e5e5e5] flex items-center justify-center relative">
          <svg width="36" height="36" viewBox="0 0 36 36">
            <rect width="36" height="36" fill="#0b7fdb" />
            <rect x="20" y="0" width="16" height="36" fill="#f2c811" opacity=".85" />
            <rect x="28" y="0" width="6" height="36" fill="#c98f00" />
            <rect x="10" y="11" width="16" height="25" fill="#e2b300" />
            <rect x="10" y="11" width="12" height="25" fill="#f2c811" />
            <rect x="4" y="24" width="14" height="12" fill="#f9e27d" />
          </svg>
          <div className="absolute left-[15px] bottom-[0px] w-[24px] h-[5px] rounded-full bg-[#0b7fdb]" />
        </div>
      </div>

      <div className="ml-auto flex items-center pr-[29px]">
        <svg width="16" height="10" viewBox="0 0 16 10" fill="none" stroke="#222" strokeWidth={1.8} className="mr-[28px]"><path d="m1 9 7-7 7 7" /></svg>
        <div className="relative w-[24px] h-[20px] mr-[24px]">
          <svg width="22" height="18" viewBox="0 0 22 18"><path d="M5 16a4 4 0 0 1 0-8 7 7 0 0 1 13-2 5 5 0 0 1 2 4l-2 6Z" fill="#888" stroke="#333" strokeWidth={1.2} /></svg>
          <div className="absolute -right-[1px] -bottom-[3px] w-[14px] h-[14px] rounded-full bg-[#e3242b] text-white text-[11px] font-bold leading-[13px] text-center">×</div>
        </div>
        <svg width="24" height="19" viewBox="0 0 24 19" fill="none" stroke="#1c1c1c" strokeWidth={1.6} className="mr-[12px]"><path d="M1 6.500c6-6 16-6 22 0M4.500 10.500c4-4 11-4 15 0M8 14c2-2 6-2 8 0" /><circle cx="12" cy="17" r="1.500" fill="#1c1c1c" stroke="none" /></svg>
        <svg width="24" height="18" viewBox="0 0 24 18" fill="none" stroke="#1c1c1c" strokeWidth={1.4} className="mr-[12px]"><path d="M1 6h4l6-5v16l-6-5H1ZM14 6c1 2 1 4 0 6M17 3c2 4 2 8 0 12" /><path d="M20 0c4 6 4 12 0 18" stroke="#bbb" /></svg>
        <svg width="24" height="14" viewBox="0 0 24 14" fill="none" stroke="#1c1c1c" strokeWidth={1.4} className="mr-[28px]"><rect x=".700" y=".700" width="20" height="12.600" rx="2.500" /><rect x="3" y="3" width="15" height="8" rx=".500" fill="#1c1c1c" stroke="none" /><path d="M22.500 5v4" strokeWidth={2} /></svg>
        <div className="flex flex-col items-end text-[17px] leading-[23px] text-[#1f1f1f] -mt-[2px]">
          <span>2:53 PM</span>
          <span>7/4/2025</span>
        </div>
      </div>
    </div>
  );
}

export default function App() {
  return (
    <div className="w-[1920px] h-[1080px] overflow-hidden flex flex-col font-['Noto_Sans','Open_Sans',sans-serif] bg-[#f3f2f1]">
      <TitleBar />
      <Ribbon />
      <div className="h-[732px] shrink-0 flex">
        <LeftNav />
        <div className="w-[1268px] shrink-0 flex flex-col">
          <div className="flex-1 flex min-h-0">
            <Canvas />
            <FilterStrip />
          </div>
          <PageTabs />
        </div>
        <BuildPane />
        <DataPane />
        <RightRail />
      </div>
      <StatusBar />
      <div className="h-[2px] shrink-0 bg-black" />
      <Taskbar />
    </div>
  );
}
